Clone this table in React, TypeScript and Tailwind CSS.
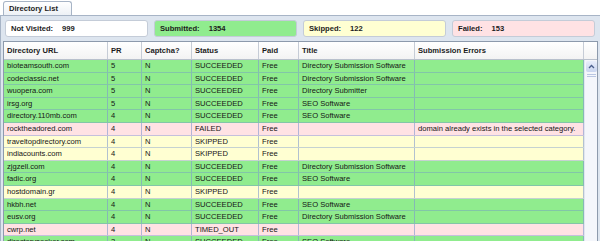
import React from "react";

type Row = { url: string; pr: string; status: string; title: string; err?: string };

const rows: Row[] = [
  { url: "bioteamsouth.com", pr: "5", status: "SUCCEEDED", title: "Directory Submission Software" },
  { url: "codeclassic.net", pr: "5", status: "SUCCEEDED", title: "Directory Submission Software" },
  { url: "wuopera.com", pr: "5", status: "SUCCEEDED", title: "Directory Submitter" },
  { url: "irsg.org", pr: "5", status: "SUCCEEDED", title: "SEO Software" },
  { url: "directory.110mb.com", pr: "4", status: "SUCCEEDED", title: "SEO Software" },
  { url: "rocktheadored.com", pr: "4", status: "FAILED", title: "", err: "domain already exists in the selected category." },
  { url: "traveltopdirectory.com", pr: "4", status: "SKIPPED", title: "" },
  { url: "indiacounts.com", pr: "4", status: "SKIPPED", title: "" },
  { url: "zjgzell.com", pr: "4", status: "SUCCEEDED", title: "Directory Submission Software" },
  { url: "fadic.org", pr: "4", status: "SUCCEEDED", title: "SEO Software" },
  { url: "hostdomain.gr", pr: "4", status: "SKIPPED", title: "" },
  { url: "hkbh.net", pr: "4", status: "SUCCEEDED", title: "SEO Software" },
  { url: "eusv.org", pr: "4", status: "SUCCEEDED", title: "Directory Submission Software" },
  { url: "cwrp.net", pr: "4", status: "TIMED_OUT", title: "" },
  { url: "directoryseeker.com", pr: "3", status: "SUCCEEDED", title: "SEO Software" },
];

function rowBg(s: string) {
  if (s === "SUCCEEDED") return "bg-[#90ec8e]";
  if (s === "SKIPPED") return "bg-[#ffffd2]";
  return "bg-[#ffe2e4]";
}

const cols = "grid grid-cols-[104px_34px_50px_67px_40px_116px_169px]";
const cell = "px-[3px] whitespace-nowrap overflow-hidden border-r border-[#7f97cf99] flex items-center";

function StatBox({ label, value, bg }: { label: string; value: string; bg: string }) {
  return (
    <div className={`w-[143px] h-[17px] rounded-[3px] border border-[#c4ccd8] ${bg} flex items-center pl-[5px] font-bold text-[#1c1c1c]`}>
      <span>{label}</span>
      <span className="ml-[9px]">{value}</span>
    </div>
  );
}

export default function App() {
  return (
    <div
      className="w-[600px] h-[241px] overflow-hidden bg-white flex flex-col text-[7.6px] leading-none text-[#151515]"
      style={{ fontFamily: "Tahoma, 'Liberation Sans', Arial, sans-serif" }}
    >
      <div className="h-[15px] flex items-end pl-[3px] shrink-0">
        <div className="w-[69px] h-[14px] border border-b-0 border-[#a7b4c6] rounded-t-[3px] bg-gradient-to-b from-white to-[#edf1f6] flex items-center pl-[5px] font-bold text-[#1c1c1c]">
          Directory List
        </div>
      </div>
      <div className="flex-1 bg-[#dde5ef] border-t border-l border-[#a7b4c6] flex flex-col">
        <div className="flex gap-[6px] pl-[4px] pt-[4px] shrink-0">
          <StatBox label="Not Visited:" value="999" bg="bg-white" />
          <StatBox label="Submitted:" value="1354" bg="bg-[#90ec8e]" />
          <StatBox label="Skipped:" value="122" bg="bg-[#ffffd2]" />
          <StatBox label="Failed:" value="153" bg="bg-[#ffe2e4]" />
        </div>
        <div className="ml-[2px] mr-[2px] mt-[4px] flex-1 border border-[#8d9aac] border-b-0 bg-white flex flex-col overflow-hidden">
          <div className="h-[18px] shrink-0 flex bg-gradient-to-b from-white to-[#f3f3f3] border-b border-[#b8c0cc] font-bold text-[#1c1c1c]">
            <div className={cols}>
              {["Directory URL", "PR", "Captcha?", "Status", "Paid", "Title", "Submission Errors"].map((h) => (
                <div key={h} className="px-[3px] flex items-center border-r border-[#c6ccd6]">
                  {h}
                </div>
              ))}
            </div>
            <div className="flex-1" />
          </div>
          <div className="flex-1 flex">
            <div className="w-[580px] flex flex-col">
              {rows.map((r, i) => (
                <div key={i} className={`${cols} ${rowBg(r.status)} h-[12.6px] shrink-0 border-b border-[#6f8fd066]`}>
                  <div className={cell}>{r.url}</div>
                  <div className={cell}>{r.pr}</div>
                  <div className={cell}>N</div>
                  <div className={cell}>{r.status}</div>
                  <div className={cell}>Free</div>
                  <div className={cell}>{r.title}</div>
                  <div className={cell}>{r.err ?? ""}</div>
                </div>
              ))}
            </div>
            <div className="flex-1 bg-[#f4f6fb] border-l border-[#e1e6ef] flex flex-col items-center">
              <div className="w-[11px] h-[11px] mt-[1px] rounded-[2px] bg-gradient-to-b from-[#e9eefb] to-[#c9d5ef] flex items-center justify-center">
                <svg width="7" height="5" viewBox="0 0 7 5">
                  <path d="M1 4 L3.5 1.5 L6 4" fill="none" stroke="#4a5e8c" strokeWidth="1.3" />
                </svg>
              </div>
              <div className="w-[9px] h-[1px] mt-[2px] bg-[#b9c6e2]" />
              <div className="w-[9px] h-[1px] mt-[1px] bg-[#b9c6e2]" />
            </div>
          </div>
        </div>
      </div>
    </div>
  );
}
